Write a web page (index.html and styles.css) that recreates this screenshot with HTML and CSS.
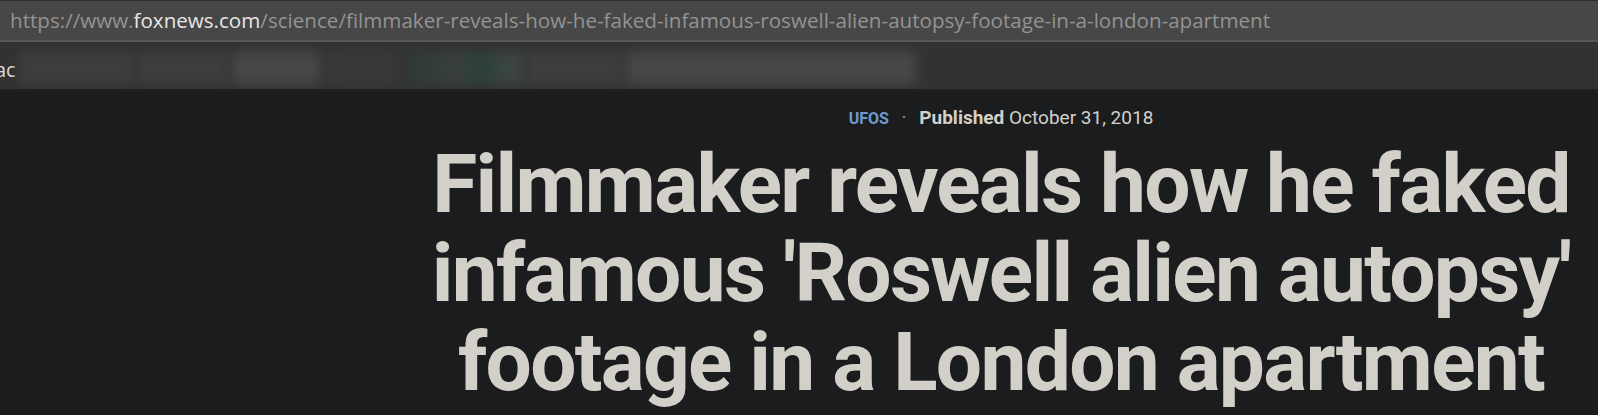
FILE: index.html
```html
<!DOCTYPE html>
<html lang="en">
    <head>
        <title>Filmmaker reveals how he faked infamous 'Roswell alien autopsy' footage</title>
        <meta charset="utf-8" name="viewport" content="width=device-width, initial-scale=1">

        <link rel="stylesheet" href="styles.css">
    </head>
    <body>
        <header class="browser">
            <div class="urlbar">
                <span class="dim">https://www.</span><span class="host">foxnews.com</span><span class="dim">/science/filmmaker-reveals-how-he-faked-infamous-roswell-alien-autopsy-footage-in-a-london-apartment</span>
            </div>
            <div class="bookmarks">
                <span class="cut">ac</span>
                <!-- bookmark names are blurred out in the screenshot -->
                <div class="blurred">
                    <span class="bm" style="width:112px"></span>
                    <span class="bm" style="width:88px"></span>
                    <span class="bm light" style="width:88px"></span>
                    <span class="bm dark" style="width:74px"></span>
                    <span class="bm green" style="width:116px"></span>
                    <span class="bm" style="width:92px"></span>
                    <span class="bm light" style="width:290px"></span>
                </div>
            </div>
        </header>

        <div id="page">
            <div class="gutter"></div>
            <article>
                <div class="meta">
                    <span class="category">UFOS</span>
                    <span class="sep">&middot;</span>
                    <b>Published</b> October 31, 2018
                </div>
                <h1>Filmmaker reveals how he faked<br>infamous 'Roswell alien autopsy'<br>footage in a London apartment</h1>
            </article>
        </div>
    </body>
</html>
```

FILE: styles.css
```css
body{
    margin: 0;
    background: #1b1c1e;
    overflow: hidden;
}
.urlbar{
    height: 39px;
    border-top: 1px solid #2e2e2e;
    border-bottom: 2px solid #575757;
    background: #474747;
    padding-left: 10px;
    font-family: "Open Sans", sans-serif;
    font-size: 20.6px;
    line-height: 39px;
    white-space: nowrap;
    overflow: hidden;
}
.dim{
    color: #939393;
}
.host{
    color: #e6e6e6;
}
.bookmarks{
    height: 47px;
    background: #323232;
    border-bottom: 2px solid #202022;
    display: flex;
    align-items: center;
    overflow: hidden;
}
.cut{
    font-family: "Open Sans", sans-serif;
    font-size: 20px;
    color: #dcdcdc;
    margin: 7px 0 0 -5px;
}
.blurred{
    display: flex;
    height: 34px;
    margin: 4px 0 0 4px;
    filter: blur(6px);
}
.bm{
    display: block;
    background: #3e3e3e;
    margin-right: 6px;
}
.bm.light{
    background: #474747;
}
.bm.dark{
    background: #383838;
}
.bm.green{
    background: linear-gradient(90deg, #2c3a34 0, #3a403c 45%, #2b4038 65%, #444847 100%);
}
#page{
    display: flex;
}
.gutter{
    width: 404px;
}
article{
    flex: 1;
    text-align: center;
    font-family: Roboto, sans-serif;
    color: #d3d0c9;
    padding-top: 15px;
}
.meta{
    font-size: 19px;
    line-height: 24px;
}
.category{
    color: #6d9bd0;
    font-weight: bold;
    font-size: 16px;
}
.sep{
    color: #9a9a9a;
    margin: 0 8px;
}
h1{
    margin: 9px 0 0;
    font-size: 82px;
    line-height: 89px;
    font-weight: bold;
    letter-spacing: -1.7px;
}
```
